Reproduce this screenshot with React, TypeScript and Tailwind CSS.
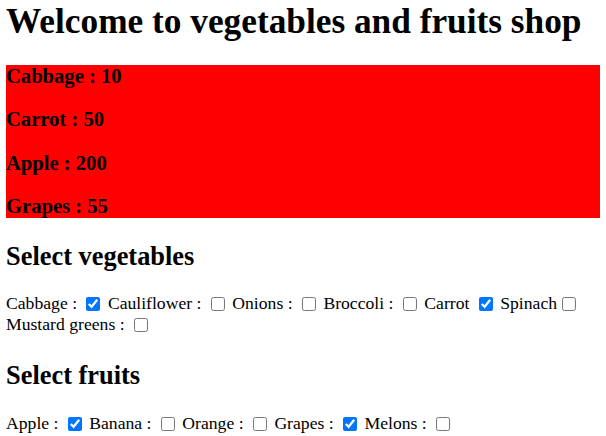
const vegetables = [
  { label: 'Cabbage : ', checked: true },
  { label: 'Cauliflower : ', checked: false },
  { label: 'Onions : ', checked: false },
  { label: 'Broccoli : ', checked: false },
  { label: 'Carrot ', checked: true },
  { label: 'Spinach', checked: false },
  { label: 'Mustard greens : ', checked: false },
];

const fruits = [
  { label: 'Apple : ', checked: true },
  { label: 'Banana : ', checked: false },
  { label: 'Orange : ', checked: false },
  { label: 'Grapes : ', checked: true },
  { label: 'Melons : ', checked: false },
];

const stock = [
  { name: 'Cabbage', qty: 10 },
  { name: 'Carrot', qty: 50 },
  { name: 'Apple', qty: 200 },
  { name: 'Grapes', qty: 55 },
];

function CheckList({ items }: { items: { label: string; checked: boolean }[] }) {
  return (
    <div className="text-[17.65px] leading-[21px]">
      {items.map((item, i) => (
        <span key={i}>
          <label>{item.label}</label>
          <input
            type="checkbox"
            defaultChecked={item.checked}
            className="w-[14px] h-[14px] mt-[3px] mb-[3px] ml-[5px] mr-[3px] align-[-2px] accent-[#0075ff]"
          />{' '}
        </span>
      ))}
    </div>
  );
}

export default function App() {
  return (
    <div className="px-[6px] pt-[2px] bg-white text-black" style={{ fontFamily: '"Liberation Serif", "Times New Roman", serif' }}>
      <h1 className="text-[35.3px] font-bold leading-[40px] mb-[23px]">Welcome to vegetables and fruits shop</h1>

      {/* stock */}
      <div className="bg-[#ff0000]">
        {stock.map((s, i) => (
          <h3 key={i} className={`text-[20.6px] font-bold leading-[23px] ${i === 0 ? 'mt-0' : 'mt-[20.3px]'}`}>
            {s.name} : {s.qty}
          </h3>
        ))}
      </div>

      <h2 className="text-[26.4px] font-bold leading-[30px] mt-[23px] mb-[22px]">Select vegetables</h2>
      <CheckList items={vegetables} />

      <h2 className="text-[26.4px] font-bold leading-[30px] mt-[25px] mb-[23px]">Select fruits</h2>
      <CheckList items={fruits} />
    </div>
  );
}
